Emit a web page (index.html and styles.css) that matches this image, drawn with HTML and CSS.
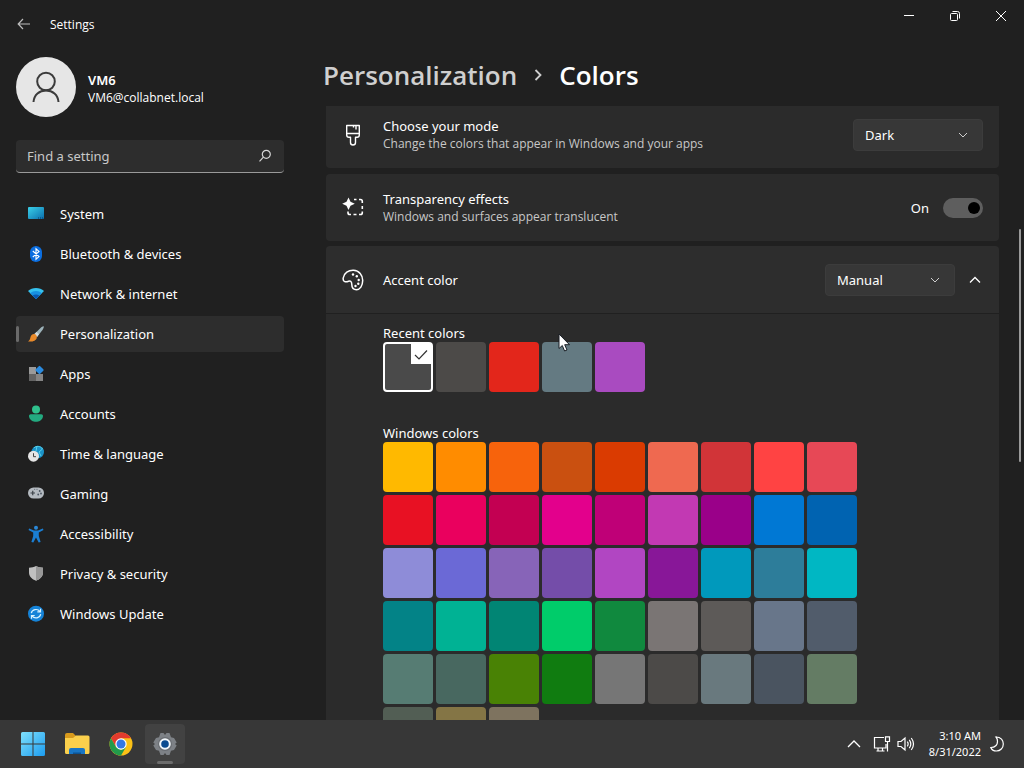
FILE: index.html
```
<!DOCTYPE html>
<html lang="en">
<head>
    <meta charset="UTF-8">
    <meta name="viewport" content="width=device-width, initial-scale=1.0">
    <title>Settings</title>
    <link rel="stylesheet" href="styles.css">
</head>
<body>

    <div class="window">
        <header class="titlebar">
            <button class="back-btn" aria-label="Back">
                <svg width="14" height="12" viewBox="0 0 14 12"><path d="M6 1L1.2 6L6 11M1.2 6H13" fill="none" stroke="#bdbdbd" stroke-width="1.2"/></svg>
            </button>
            <span class="app-name">Settings</span>
            <div class="window-controls">
                <button aria-label="Minimize"><svg width="12" height="12" viewBox="0 0 12 12"><path d="M1 5.500H11" stroke="#fff"/></svg></button>
                <button aria-label="Restore"><svg width="12" height="12" viewBox="0 0 12 12"><g fill="none" stroke="#fff"><rect x="1.500" y="3.500" width="7" height="7" rx="1"/><path d="M3.500 1.500H8.500a2 2 0 0 1 2 2V8.500"/></g></svg></button>
                <button aria-label="Close"><svg width="12" height="12" viewBox="0 0 12 12"><path d="M1 1L11 11M11 1L1 11" stroke="#fff"/></svg></button>
            </div>
        </header>

        <div class="layout">
            <aside class="sidebar">
                <div class="account">
                    <div class="avatar">
                        <svg width="28" height="32" viewBox="0 0 28 32"><g fill="none" stroke="#3b3b3b" stroke-width="2"><circle cx="14" cy="10.500" r="8.800"/><path d="M1.500 31C2 23.500 7.500 19.400 14 19.400S26 23.500 26.500 31"/></g></svg>
                    </div>
                    <div class="account-text">
                        <div class="account-name">VM6</div>
                        <div class="account-mail">VM6@collabnet.local</div>
                    </div>
                </div>

                <div class="search">
                    <input type="text" placeholder="Find a setting" aria-label="Find a setting">
                    <svg width="14" height="14" viewBox="0 0 14 14"><g fill="none" stroke="#d6d6d6" stroke-width="1.200"><circle cx="8.300" cy="5.300" r="4"/><path d="M5.400 8.200L1.500 12.300"/></g></svg>
                </div>

                <nav class="nav">
                    <a href="#">
                        <svg viewBox="0 0 16 16"><defs><linearGradient id="sys" x1="0" y1="0" x2="1" y2="1"><stop offset="0" stop-color="#3ad0e8"/><stop offset="1" stop-color="#0b6fae"/></linearGradient></defs><rect y="1" width="16" height="12" rx="1" fill="url(#sys)"/><path d="M10 12h1M12 12h1M14 12h1" stroke="#0a3c66"/></svg>
                        System
                    </a>
                    <a href="#">
                        <svg viewBox="0 0 16 16"><rect x="2" y="0" width="12" height="16" rx="6" fill="#0b6ee0"/><path d="M4.800 5L11 10.600L8 13.200V2.800L11 5.400L4.800 11" fill="none" stroke="#fff" stroke-width="1.100"/></svg>
                        Bluetooth &amp; devices
                    </a>
                    <a href="#">
                        <svg viewBox="0 0 16 16"><path d="M0 5C4 1 12 1 16 5L8 13Z" fill="#35c1ee"/><path d="M2.200 7.200C5.500 4.200 10.500 4.200 13.800 7.200L8 13Z" fill="#1790e0"/><path d="M4.600 9.600C6.500 8 9.500 8 11.400 9.600L8 13Z" fill="#0a57b0"/></svg>
                        Network &amp; internet
                    </a>
                    <a href="#" class="active" aria-current="page">
                        <svg viewBox="0 0 16 16"><path d="M15.600.3C16.200.9 15.500 2.400 14.500 4L9 11L6.200 8.300L12.500 1.900C13.800.8 15 0 15.600.3Z" fill="#9db3ba"/><path d="M8.500 6L11 8.300L9 11L6.200 8.300Z" fill="#d5dcdd"/><path d="M6 8C8 8 9.200 10 8.800 11.700C8.200 14.800 4 16.200 0 15.400C2 14.500 2 12.800 2.600 10.800C3 9.200 4.400 8 6 8Z" fill="#e98a2a"/></svg>
                        Personalization
                    </a>
                    <a href="#">
                        <svg viewBox="0 0 16 16"><rect x="1" y="1" width="7" height="7" fill="#9a9a9a"/><rect x="1" y="8" width="7" height="7" fill="#646464"/><rect x="8" y="8" width="7" height="7" fill="#858585"/><rect x="8.300" y=".8" width="6.400" height="6.400" rx="1" transform="rotate(45 11.500 4)" fill="#2a8be0"/></svg>
                        Apps
                    </a>
                    <a href="#">
                        <svg viewBox="0 0 16 16"><circle cx="8" cy="3.500" r="4" fill="#2fc08c"/><path d="M3 8.300H13C15 8.300 15.300 9.800 14.800 11.200C13.800 14.500 11 15.700 8 15.700S2.200 14.500 1.200 11.200C.7 9.800 1 8.300 3 8.300Z" fill="#23aa80"/></svg>
                        Accounts
                    </a>
                    <a href="#">
                        <svg viewBox="0 0 16 16"><circle cx="9.800" cy="6" r="6.200" fill="#1b93c8"/><path d="M6 2C8-.5 13 0 14.500 3L11 6L13 10M9 0L8 5" fill="none" stroke="#57d0ea"/><circle cx="5.500" cy="10.200" r="5.500" fill="#e6e6e6"/><path d="M5.500 7.200V10.700H8" fill="none" stroke="#444"/></svg>
                        Time &amp; language
                    </a>
                    <a href="#">
                        <svg viewBox="0 0 16 16"><rect y="1.500" width="16" height="11" rx="5.500" fill="#b4bac0"/><path d="M2.500 7H7M4.750 4.700V9.300" stroke="#3c4248" stroke-width="1.200"/><circle cx="11.700" cy="5" r=".9" fill="#4a5560"/><circle cx="13" cy="7.500" r=".9" fill="#4a5560"/><circle cx="10.200" cy="8.500" r=".9" fill="#4a5560"/><circle cx="6.700" cy="3.300" r=".5" fill="#4a5560"/><circle cx="9" cy="3.300" r=".5" fill="#4a5560"/></svg>
                        Gaming
                    </a>
                    <a href="#">
                        <svg viewBox="0 0 16 16"><circle cx="8" cy="1.700" r="2" fill="#2b88d8"/><path d="M1.200 2.500L6 4.600H10L14.800 2.500L15.500 4L10.800 6.500V10L12.600 16L10.700 16.500L8 11.500L5.300 16.500L3.400 16L5.200 10V6.500L.5 4Z" fill="#1a7fd4"/></svg>
                        Accessibility
                    </a>
                    <a href="#">
                        <svg viewBox="0 0 16 16"><path d="M8 0C10 1.200 12.500 1.700 15 1.700V6.500C15 10.500 12 13.300 8 14.700C4 13.300 1 10.500 1 6.500V1.700C3.500 1.700 6 1.200 8 0Z" fill="#c0c0c0"/><path d="M8 0C10 1.200 12.500 1.700 15 1.700V6.500C15 10.500 12 13.300 8 14.700Z" fill="#989898"/></svg>
                        Privacy &amp; security
                    </a>
                    <a href="#">
                        <svg viewBox="0 0 16 16"><circle cx="8" cy="7.700" r="8" fill="#1583d8"/><path d="M3.300 7.200C4 3.300 9.500 2.100 12 5.500M12.500 2.700V5.900H9.300M12.700 8.200C12 12.100 6.500 13.300 4 9.900M3.500 12.700V9.500H6.700" fill="none" stroke="#d8f2ff" stroke-width="1.200"/></svg>
                        Windows Update
                    </a>
                </nav>
            </aside>

            <main class="content">
                <h1 class="breadcrumb">
                    <a href="#">Personalization</a>
                    <svg width="8" height="12" viewBox="0 0 8 12"><path d="M1.500 1L6.500 6L1.500 11" fill="none" stroke="#cfcfcf" stroke-width="1.800"/></svg>
                    <span>Colors</span>
                </h1>

                <div class="scroll-area">
                    <section class="card card-first">
                        <svg class="card-icon" width="22" height="22" viewBox="0 0 22 22"><g fill="none" stroke="#fff" stroke-width="1.400" stroke-linejoin="round"><path d="M4.700 1.500H17.300V11C17.300 12.500 16.500 13.200 15 13.200H13.500V18.500A2.500 2.500 0 0 1 8.500 18.500V13.200H7C5.500 13.200 4.700 12.500 4.700 11ZM4.700 9.500H17.300M14 1.500V5.500M11.500 1.500V3.500"/></g></svg>
                        <div class="card-text">
                            <label class="card-title" for="mode">Choose your mode</label>
                            <div class="card-desc">Change the colors that appear in Windows and your apps</div>
                        </div>
                        <div class="dropdown">
                            <select id="mode"><option>Dark</option><option>Light</option><option>Custom</option></select>
                            <svg width="10" height="6" viewBox="0 0 10 6"><path d="M1 1L5 5L9 1" fill="none" stroke="#cfcfcf"/></svg>
                        </div>
                    </section>

                    <section class="card">
                        <svg class="card-icon" width="22" height="22" viewBox="0 0 22 22"><path d="M6.500 .5L8.500 4.700L12.800 6.700L8.500 8.700L6.500 13L4.500 8.700L.2 6.700L4.500 4.700Z" fill="#fff"/><path d="M12 2.500H14.500M17 2.500H18.500Q20.300 2.500 20.300 4.300V6M20.300 9V12M20.300 14.500V15.700Q20.300 17.500 18.500 17.500H17M14.500 17.500H11.500M9 17.500H7.800Q6 17.500 6 15.700V14.500" fill="none" stroke="#fff" stroke-width="1.600"/></svg>
                        <div class="card-text">
                            <label class="card-title" for="transparency">Transparency effects</label>
                            <div class="card-desc">Windows and surfaces appear translucent</div>
                        </div>
                        <span class="toggle-state">On</span>
                        <input class="toggle" type="checkbox" role="switch" id="transparency" checked>
                    </section>

                    <section class="card card-accent">
                        <svg class="card-icon" width="22" height="22" viewBox="0 0 22 22"><path d="M1.200 9C2 4 6.500 1 11.500 1.200C17 1.500 20.800 6 20.700 11.500C20.600 17 18 20.700 14.500 20.700C11.500 20.700 9.800 18.500 9.800 15.500C9.800 12.500 8.500 11.500 6.500 12.300C4 13.300 .6 13.300 1.200 9Z" fill="none" stroke="#fff" stroke-width="1.500"/><g fill="#fff"><circle cx="11" cy="5.500" r="1.200"/><circle cx="14.800" cy="7.300" r="1.200"/><circle cx="16.700" cy="11" r="1.200"/><circle cx="16.300" cy="14.800" r="1.200"/><circle cx="13.500" cy="17" r="1.200"/></g></svg>
                        <div class="card-text">
                            <label class="card-title" for="accent">Accent color</label>
                        </div>
                        <div class="dropdown">
                            <select id="accent"><option>Manual</option><option>Automatic</option></select>
                            <svg width="10" height="6" viewBox="0 0 10 6"><path d="M1 1L5 5L9 1" fill="none" stroke="#cfcfcf"/></svg>
                        </div>
                        <button class="collapse-btn" aria-label="Collapse"><svg width="12" height="8" viewBox="0 0 12 8"><path d="M1 6.500L6 1.500L11 6.500" fill="none" stroke="#fff" stroke-width="1.300"/></svg></button>
                    </section>

                    <div class="card-body">
                        <h2>Recent colors</h2>
                        <div class="swatches" id="recent-colors"></div>
                        <h2>Windows colors</h2>
                        <div class="swatches" id="windows-colors"></div>
                    </div>
                </div>
            </main>
        </div>
        <div class="scroll-thumb"></div>
    </div>

    <footer class="taskbar">
        <button aria-label="Start">
            <svg width="24" height="24" viewBox="0 0 24 24"><defs><linearGradient id="win" x1="0" y1="0" x2="1" y2="1"><stop offset="0" stop-color="#7fe0fb"/><stop offset="1" stop-color="#1c9cf0"/></linearGradient></defs><path d="M0 1.500Q0 0 1.500 0H11.500V11.500H0ZM12.500 0H22.500Q24 0 24 1.500V11.500H12.500ZM0 12.500H11.500V24H1.500Q0 24 0 22.500ZM12.500 12.500H24V22.500Q24 24 22.500 24H12.500Z" fill="url(#win)"/></svg>
        </button>
        <button aria-label="File Explorer">
            <svg width="26" height="24" viewBox="0 0 26 24"><path d="M1 3Q1 1 3 1H9L12 4V10H1Z" fill="#d89a1c"/><path d="M1 6H9L12 3.500H24Q25.500 3.500 25.500 5V20.500Q25.500 22 24 22H2.500Q1 22 1 20.500Z" fill="#fbd04c"/><path d="M5 22V18Q5 16 7 16H19Q21 16 21 18V22Z" fill="#1976c5"/><path d="M9 22V20.500H17V22Z" fill="#0d5393"/></svg>
        </button>
        <button aria-label="Google Chrome">
            <svg width="24" height="24" viewBox="0 0 24 24"><circle cx="12" cy="12" r="11.500" fill="#fbc116"/><path d="M2 6.300A11.500 11.500 0 0 1 22 6.300H12L7 14.900Z" fill="#e33b2e"/><path d="M2 6.300L7 14.900L12 17.700L17 14.900L12 23.500A11.500 11.500 0 0 1 2 6.300Z" fill="#229a4b"/><circle cx="12" cy="12" r="5.700" fill="#fff"/><circle cx="12" cy="12" r="4.500" fill="#3478e5"/></svg>
        </button>
        <button class="running" aria-label="Settings">
            <svg width="24" height="24" viewBox="0 0 24 24"><path d="M7.500 1H10.500L12 3L13.500 1H16.500L18 5.200L21 6L23.700 10.500L22 12L23.700 13.500L21 18L18 18.800L16.500 23H13.500L12 21L10.500 23H7.500L6 18.800L3 18L.3 13.500L2 12L.3 10.500L3 6L6 5.200Z" fill="#7d8186"/><circle cx="12" cy="12" r="7" fill="#696d72"/><circle cx="12" cy="12" r="4.800" fill="#0c4c91" stroke="#f2f7fb" stroke-width="2"/></svg>
        </button>

        <div class="tray">
            <button aria-label="Show hidden icons"><svg width="14" height="8" viewBox="0 0 14 8"><path d="M1 7L7 1L13 7" fill="none" stroke="#fff" stroke-width="1.300"/></svg></button>
            <button aria-label="Network"><svg width="18" height="16" viewBox="0 0 18 16"><g fill="none" stroke="#fff" stroke-width="1.200"><path d="M11 1.500H1.500V12H13V8M5 12V14.800M9.500 12V14.800M3.500 15H11.500M12.500 .8H16.500V5.500H12.500ZM14.500 5.500V15.500"/></g></svg></button>
            <button aria-label="Volume"><svg width="18" height="16" viewBox="0 0 18 16"><g fill="none" stroke="#fff" stroke-width="1.200"><path d="M1 5.500H4L8 2V14L4 10.500H1ZM10.300 5.700Q12 8 10.300 10.300M12.300 3.800Q15.300 8 12.300 12.200M14.300 2Q18.700 8 14.300 14"/></g></svg></button>
            <div class="clock">
                <div>3:10 AM</div>
                <div>8/31/2022</div>
            </div>
            <button aria-label="Focus assist"><svg width="14" height="16" viewBox="0 0 14 16"><path d="M6 1C11 1 13.300 4.500 13.300 8C13.300 12 10.300 15 6.500 15C3.500 15 1.500 13.500 .8 11.500C5 11.500 7.500 9 7.500 5.500C7.500 3.500 7 2.200 6 1Z" fill="none" stroke="#fff" stroke-width="1.200"/></svg></button>
        </div>
    </footer>

    <svg class="cursor" width="14" height="20" viewBox="0 0 14 20"><path d="M1 1V15.500L4.300 12.500L6.600 18L9 17L6.700 11.700H11.500Z" fill="#fff" stroke="#1a1f26"/></svg>

    <script>
        const recentColors = ['#4a4a4a', '#4c4a48', '#e3261b', '#647a82', '#a94bc0'];

        const windowsColors = [
            '#ffb900', '#ff8c00', '#f7630c', '#ca5010', '#da3b01', '#ef6950', '#d13438', '#ff4343', '#e74856',
            '#e81123', '#ea005e', '#c30052', '#e3008c', '#bf0077', '#c239b3', '#9a0089', '#0078d4', '#0063b1',
            '#8e8cd8', '#6b69d6', '#8764b8', '#744da9', '#b146c2', '#881798', '#0099bc', '#2d7d9a', '#00b7c3',
            '#038387', '#00b294', '#018574', '#00cc6a', '#10893e', '#7a7574', '#5d5a58', '#68768a', '#515c6b',
            '#567c73', '#486860', '#498205', '#107c10', '#767676', '#4c4a48', '#69797e', '#4a5460', '#647c64',
            '#525e54', '#847545', '#7e735f'
        ];

        function fillSwatches(id, colors, selected) {
            const list = document.getElementById(id);

            colors.forEach((color, index) => {
                const swatch = document.createElement('button');
                swatch.classList.add('swatch');
                swatch.style.backgroundColor = color;
                swatch.setAttribute('aria-label', color);

                if (index === selected) {
                    swatch.classList.add('selected');
                    swatch.innerHTML = '<svg width="20" height="20" viewBox="0 0 20 20"><path d="M0 0H20V20H0Z" fill="#fff"/><path d="M4 11L8 15L16 6.500" fill="none" stroke="#333" stroke-width="1.200"/></svg>';
                }

                list.appendChild(swatch);
            });
        }

        fillSwatches('recent-colors', recentColors, 0);
        fillSwatches('windows-colors', windowsColors, -1);
    </script>
</body>
</html>
```
FILE: styles.css
```
* {
    box-sizing: border-box;
}

body {
    font-family: "Noto Sans", "Open Sans", sans-serif;
    font-size: 13px;
    line-height: 18px;
    margin: 0;
    height: 100vh;
    display: flex;
    flex-direction: column;
    overflow: hidden;
    color: #fff;
    background-color: #202020;
}

button {
    display: flex;
    align-items: center;
    justify-content: center;
    padding: 0;
    border: none;
    background: none;
    color: inherit;
    font: inherit;
}

a {
    color: inherit;
    text-decoration: none;
}

svg {
    flex: none;
}

.window {
    position: relative;
    flex: 1;
    min-height: 0;
    display: flex;
    flex-direction: column;
}

.titlebar {
    display: flex;
    align-items: center;
    height: 48px;
    flex: none;
}

.back-btn {
    width: 48px;
    height: 48px;
}

.app-name {
    font-family: "Open Sans", "Noto Sans", sans-serif;
    font-size: 12px;
    padding: 2px 0 0 2px;
}

.window-controls {
    display: flex;
    align-self: flex-start;
    margin-left: auto;
}

.window-controls button {
    width: 46px;
    height: 32px;
}

.layout {
    flex: 1;
    min-height: 0;
    display: flex;
}

/* sidebar */
.sidebar {
    width: 300px;
    flex: none;
    padding: 9px 16px 0;
}

.account {
    display: flex;
    align-items: center;
    gap: 12px;
}

.account-text {
    padding-top: 4px;
}

.account-name {
    font-weight: 600;
}

.account-mail {
    font-family: "Open Sans", "Noto Sans", sans-serif;
    font-size: 12px;
}

.avatar {
    display: flex;
    align-items: center;
    justify-content: center;
    width: 60px;
    height: 60px;
    border-radius: 50%;
    background-color: #e6e6e6;
}

.search {
    display: flex;
    align-items: center;
    height: 33px;
    margin-top: 23px;
    padding: 0 12px 0 11px;
    border-bottom: 1px solid #9a9a9a;
    border-radius: 4px;
    background-color: #2d2d2d;
}

.search input {
    flex: 1;
    min-width: 0;
    padding: 0;
    border: none;
    outline: none;
    background: none;
    color: #fff;
    font: inherit;
}

.search input::placeholder {
    color: #c8c8c8;
    opacity: 1;
}

.nav {
    display: flex;
    flex-direction: column;
    gap: 4px;
    margin-top: 23px;
}

.nav a {
    display: flex;
    align-items: center;
    gap: 16px;
    height: 36px;
    padding-left: 12px;
    border-radius: 4px;
}

.nav svg {
    width: 16px;
    height: 16px;
    overflow: visible;
}

.nav .active {
    position: relative;
    background-color: #2d2d2d;
}

.nav .active::before {
    content: "";
    position: absolute;
    left: 0;
    top: 10px;
    width: 3px;
    height: 16px;
    border-radius: 2px;
    background-color: #6a6a6a;
}

/* content */
.content {
    flex: 1;
    min-width: 0;
    display: flex;
    flex-direction: column;
    padding: 9px 25px 0 26px;
}

.breadcrumb {
    display: flex;
    align-items: center;
    gap: 17px;
    margin: 0 0 0 -3px;
    padding-bottom: 13px;
    font-family: "Open Sans", "Noto Sans", sans-serif;
    font-size: 26px;
    line-height: 36px;
    font-weight: 600;
}

.breadcrumb a {
    color: #cfcfcf;
}

.scroll-area {
    flex: 1;
    min-height: 0;
    overflow: hidden;
}

.card {
    display: flex;
    align-items: center;
    height: 67px;
    margin-bottom: 6px;
    padding: 0 16px;
    border-radius: 4px;
    background-color: #2b2b2b;
}

/* list is scrolled down a little */
.card-first {
    margin-top: -5px;
}

.card-icon {
    margin-right: 19px;
}

.card-text {
    flex: 1;
    min-width: 0;
}

.card-title {
    display: block;
}

.card-desc {
    font-family: "Open Sans", "Noto Sans", sans-serif;
    font-size: 12px;
    color: #c8c8c8;
}

.card-accent {
    margin: -1px 0 1px;
    border-radius: 4px 4px 0 0;
    background-color: #2d2d2d;
}

.dropdown {
    display: grid;
    align-items: center;
    width: 130px;
}

.dropdown select,
.dropdown svg {
    grid-area: 1 / 1;
}

.dropdown select {
    appearance: none;
    width: 100%;
    height: 32px;
    padding: 0 11px;
    border: 1px solid #3c3c3c;
    border-radius: 4px;
    background-color: #373737;
    color: #fff;
    font: inherit;
}

.dropdown svg {
    justify-self: end;
    margin-right: 15px;
    pointer-events: none;
}

.collapse-btn {
    width: 16px;
    height: 32px;
    margin-left: 12px;
}

.toggle-state {
    margin-right: 14px;
}

.toggle {
    appearance: none;
    display: flex;
    align-items: center;
    width: 40px;
    height: 20px;
    margin: 0;
    padding: 0 3px;
    border-radius: 10px;
    background-color: #3a3a3a;
}

.toggle::before {
    content: "";
    width: 12px;
    height: 12px;
    border-radius: 50%;
    background-color: #000;
}

.toggle:checked {
    justify-content: flex-end;
    background-color: #5e5e5e;
}

.card-body {
    padding: 10px 57px 16px;
    background-color: #2b2b2b;
}

.card-body h2 {
    margin: 0;
    font-size: 13px;
    line-height: 18px;
    font-weight: 400;
}

.swatches {
    display: flex;
    flex-wrap: wrap;
    gap: 3px;
    max-width: 474px;
}

.swatches + h2 {
    margin-top: 32px;
}

.swatch {
    width: 50px;
    height: 50px;
    border-radius: 4px;
}

.swatch.selected {
    align-items: flex-start;
    justify-content: flex-end;
    border: 2px solid #fff;
}

.scroll-thumb {
    position: absolute;
    right: 3px;
    top: 229px;
    width: 2px;
    height: 233px;
    border-radius: 1px;
    background-color: #9a9a9a;
}

/* taskbar */
.taskbar {
    display: flex;
    align-items: center;
    gap: 4px;
    height: 48px;
    flex: none;
    padding: 0 20px 0 13px;
    background-color: #373737;
}

.taskbar > button {
    position: relative;
    width: 40px;
    height: 40px;
    border-radius: 4px;
}

.taskbar .running {
    background-color: #424242;
}

.running::after {
    content: "";
    position: absolute;
    left: 12px;
    bottom: 0;
    width: 16px;
    height: 3px;
    border-radius: 2px;
    background-color: #6c6c6c;
}

.tray {
    display: flex;
    align-items: center;
    gap: 6px;
    margin-left: auto;
}

.tray button:first-child {
    margin-right: 6px;
}

.clock {
    margin: 0 3px 0 8px;
    font-size: 11px;
    line-height: 16px;
    text-align: right;
}

.cursor {
    position: absolute;
    left: 558px;
    top: 333px;
}
```
